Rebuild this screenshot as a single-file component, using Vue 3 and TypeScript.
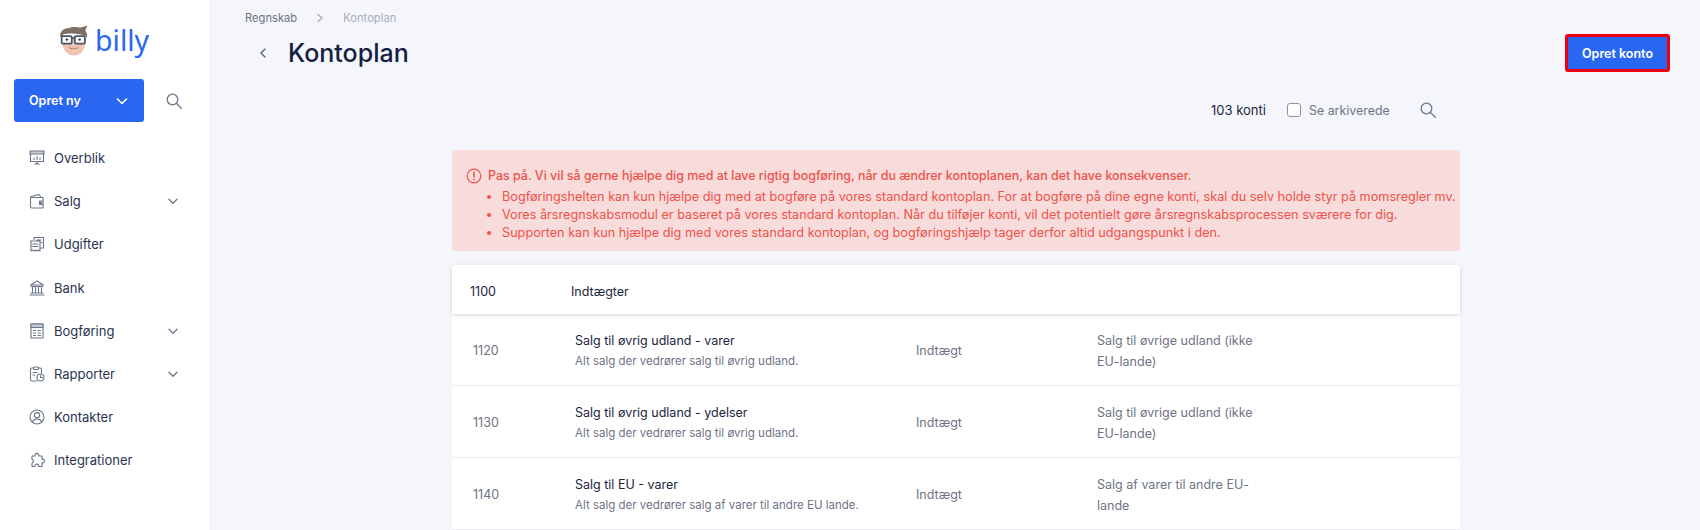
<script setup lang="ts">
interface NavItem { label: string; icon: string; caret?: boolean }
const nav: NavItem[] = [
  { label: 'Overblik', icon: 'board' },
  { label: 'Salg', icon: 'wallet', caret: true },
  { label: 'Udgifter', icon: 'bills' },
  { label: 'Bank', icon: 'bank' },
  { label: 'Bogføring', icon: 'calc', caret: true },
  { label: 'Rapporter', icon: 'report', caret: true },
  { label: 'Kontakter', icon: 'user' },
  { label: 'Integrationer', icon: 'puzzle' },
]
const rows = [
  { no: '1120', name: 'Salg til øvrig udland - varer', sub: 'Alt salg der vedrører salg til øvrig udland.', type: 'Indtægt', vat: 'Salg til øvrige udland (ikke EU-lande)' },
  { no: '1130', name: 'Salg til øvrig udland - ydelser', sub: 'Alt salg der vedrører salg til øvrig udland.', type: 'Indtægt', vat: 'Salg til øvrige udland (ikke EU-lande)' },
  { no: '1140', name: 'Salg til EU - varer', sub: 'Alt salg der vedrører salg af varer til andre EU lande.', type: 'Indtægt', vat: 'Salg af varer til andre EU-lande' },
]
</script>

<template>
  <div class="page">
    <aside class="side">
      <div class="logo">
        <svg width="29" height="33" viewBox="3 0 33 36">
          <path d="M5.500 14 C5.500 28 12 35 20 35 C29 35 33.500 28 33.500 14 Z" fill="#f0c4ae" />
          <path d="M4 13 C5 6 9 4 14 4 C20 1 26 4 29 3 L35 1 L33 7 C35 10 35 12 35 15 L33 13 C28 10 14 9 8 11 L6 15 Z" fill="#7d6f63" />
          <rect x="6" y="13" width="11.500" height="8.500" rx="1.500" fill="#fff" stroke="#44586a" stroke-width="2" />
          <rect x="21" y="13" width="11.500" height="8.500" rx="1.500" fill="#fff" stroke="#44586a" stroke-width="2" />
          <path d="M17.500 15h3.500" stroke="#44586a" stroke-width="2" />
          <circle cx="12" cy="17" r="1.400" fill="#333" />
          <circle cx="26.500" cy="17" r="1.400" fill="#333" />
          <path d="M14 26 C17 28 22 28 25 26" stroke="#a9786a" stroke-width="1" fill="none" />
        </svg>
        <span class="logo-text">billy</span>
      </div>
      <div class="create-row">
        <button class="create">
          <span>Opret ny</span>
          <svg width="14" height="14" viewBox="0 0 14 14" fill="none" stroke="#fff" stroke-width="1.600" stroke-linecap="round" stroke-linejoin="round"><path d="M2.500 5 7 9.500 11.500 5" /></svg>
        </button>
        <svg class="search-a" width="16" height="16" viewBox="0 0 16 16" fill="none" stroke="#6b7689" stroke-width="1.300" stroke-linecap="round"><circle cx="6.500" cy="6.500" r="5.300" /><path d="m10.500 10.500 4.800 4.800" /></svg>
      </div>
      <nav class="nav">
        <div v-for="n in nav" :key="n.label" class="nav-item">
          <svg class="nav-ico" width="16" height="16" viewBox="0 0 16 16" fill="none" stroke="#6b7689" stroke-width="1.100" stroke-linejoin="round" stroke-linecap="round">
            <g v-if="n.icon === 'board'"><rect x="1" y="1" width="14" height="3" fill="#c6ccd6" /><path d="M1.500 4v7.500h13V4M8 11.500v2M6 14.500l2-1.500 2 1.500M5 9.500V8M8 9.500V6.500M11 9.500V7.500" /></g>
            <g v-else-if="n.icon === 'wallet'"><path d="M2 3.500 10 1.500l1.500 2M1.500 4.500h12.500v10.500H3a1.500 1.500 0 0 1-1.500-1.500Z" /><path d="M14 8h-3.500v3.500H14" /><circle cx="12" cy="9.700" r=".7" /></g>
            <g v-else-if="n.icon === 'bills'"><path d="M5 3.500V1.500h9.500v10.500H12M1.500 5h9.500v10l-1.500-1-1.500 1-1.500-1-1.500 1-1.500-1-1.500 1V5ZM3.500 8h5.500M3.500 10.500h5.500M8 4h4M12 6.500h1" /></g>
            <g v-else-if="n.icon === 'bank'"><path d="M8 1 14.500 5h-13ZM2 6.500h12M3.500 7.500v5M6.500 7.500v5M9.500 7.500v5M12.500 7.500v5M2 13h12M1 15h14" /></g>
            <g v-else-if="n.icon === 'calc'"><rect x="2" y="1" width="12" height="14" /><rect x="2" y="1" width="12" height="3.500" fill="#c6ccd6" /><path d="M4.500 7.500h2M9 7.500h2.500M4.500 10h2M9 10h2.500M4.500 12.500h2M9 12.500h2.500" /></g>
            <g v-else-if="n.icon === 'report'"><path d="M7.500 15H3a1.500 1.500 0 0 1-1.500-1.500v-10A1.500 1.500 0 0 1 3 2h1.500M9.500 2H11a1.500 1.500 0 0 1 1.500 1.500V7" /><rect x="4.500" y="1" width="5" height="2.500" rx="1" /><circle cx="11.500" cy="11.500" r="3.500" /><path d="M11.500 9.500v2h2M4 6.500h4M4 9h2" /></g>
            <g v-else-if="n.icon === 'user'"><circle cx="8" cy="8" r="7" /><circle cx="8" cy="6.200" r="2.600" /><path d="M3.200 13c1-2.200 2.800-3 4.800-3s3.800.8 4.800 3" /></g>
            <g v-else><path d="M3 4h3a2 2 0 1 1 3.800 0H13v3.200a1.900 1.900 0 1 1 0 3.600V14.500H9.500a1.800 1.800 0 0 0-3.200-1.600l-.3 1.600H3v-3.300a1.900 1.900 0 0 0 0-3.700Z" /></g>
          </svg>
          <span class="nav-label">{{ n.label }}</span>
          <svg v-if="n.caret" class="caret" width="12" height="12" viewBox="0 0 12 12" fill="none" stroke="#6b7689" stroke-width="1.300" stroke-linecap="round" stroke-linejoin="round"><path d="M2 4.200 6 8.200 10 4.200" /></svg>
        </div>
      </nav>
    </aside>

    <main class="main">
      <div class="crumbs">
        <span class="c1">Regnskab</span>
        <svg width="8" height="10" viewBox="0 0 8 10" fill="none" stroke="#a9aeb9" stroke-width="1.400"><path d="M1.500 1 6 5 1.500 9" /></svg>
        <span class="c2">Kontoplan</span>
      </div>
      <header class="head">
        <svg class="back" width="8" height="10" viewBox="0 0 8 10" fill="none" stroke="#5c6678" stroke-width="1.400" stroke-linecap="round"><path d="M6 1 2 5l4 4" /></svg>
        <h1>Kontoplan</h1>
        <button class="primary">Opret konto</button>
      </header>
      <div class="tools">
        <span class="count">103 konti</span>
        <span class="check"></span>
        <span class="arch">Se arkiverede</span>
        <svg width="16" height="16" viewBox="0 0 16 16" fill="none" stroke="#6b7689" stroke-width="1.300" stroke-linecap="round"><circle cx="6.500" cy="6.500" r="5.300" /><path d="m10.500 10.500 4.800 4.800" /></svg>
      </div>

      <section class="content">
        <div class="alert">
          <div class="alert-title">
            <svg width="16" height="16" viewBox="0 0 16 16" fill="none" stroke="#f0514a" stroke-width="1.200" stroke-linecap="round"><circle cx="8" cy="8" r="6.800" /><path d="M8 4.200v4.600M8 11.300v.3" stroke-width="1.600" /></svg>
            <span>Pas på. Vi vil så gerne hjælpe dig med at lave rigtig bogføring, når du ændrer kontoplanen, kan det have konsekvenser.</span>
          </div>
          <ul>
            <li>Bogføringshelten kan kun hjælpe dig med at bogføre på vores standard kontoplan. For at bogføre på dine egne konti, skal du selv holde styr på momsregler mv.</li>
            <li>Vores årsregnskabsmodul er baseret på vores standard kontoplan. Når du tilføjer konti, vil det potentielt gøre årsregnskabsprocessen sværere for dig.</li>
            <li>Supporten kan kun hjælpe dig med vores standard kontoplan, og bogføringshjælp tager derfor altid udgangspunkt i den.</li>
          </ul>
        </div>

        <div class="table">
          <div class="group"><span class="g-no">1100</span><span>Indtægter</span></div>
          <div v-for="r in rows" :key="r.no" class="row">
            <span class="r-no">{{ r.no }}</span>
            <div class="r-name"><div class="nm">{{ r.name }}</div><div class="sub">{{ r.sub }}</div></div>
            <span class="r-type">{{ r.type }}</span>
            <span class="r-vat">{{ r.vat }}</span>
          </div>
        </div>
      </section>
    </main>
  </div>
</template>

<style>
html, body { margin: 0; background: #f4f6fb; overflow: hidden; }
</style>

<style scoped>
.page { display: flex; height: 530px; overflow: hidden; font-family: Inter, "Noto Sans", sans-serif; font-size: 13px; color: #1c2540; }
.side { width: 209px; flex: none; background: #fff; box-sizing: border-box; padding-top: 19px; }
.logo { display: flex; align-items: center; gap: 7px; height: 42px; padding-left: 59px; }
.logo-text { font-family: "Noto Sans", sans-serif; font-size: 28.500px; color: #2a67f0; line-height: 1; }
.create-row { display: flex; align-items: center; margin-top: 18px; padding-left: 14px; }
.create { width: 130px; height: 43px; box-sizing: border-box; padding: 0 15px; border: 0; border-radius: 3px; background: #2a67f0; color: #fff; font: 600 12.500px Inter, sans-serif; display: flex; align-items: center; justify-content: space-between; }
.search-a { margin-left: 22px; }
.nav { margin-top: 14.400px; padding-left: 29px; }
.nav-item { height: 43.200px; display: flex; align-items: center; position: relative; }
.nav-label { margin-left: 9px; font-size: 13px; color: #2a3350; }
.caret { position: absolute; left: 138px; }
.main { flex: 1; min-width: 0; }
.crumbs { display: flex; align-items: center; gap: 19px; height: 14px; margin: 11px 0 0 36px; font-size: 11.200px; }
.c1 { color: #6d7485; }
.c2 { color: #a9aeb9; }
.head { display: flex; align-items: center; height: 38px; margin-top: 9px; padding: 0 30px 0 50px; }
h1 { margin: 0 0 0 21px; font-size: 25px; font-weight: 500; color: #14203f; flex: 1; }
.primary { width: 105px; height: 38px; background: #2a67f0; border: 3px solid #f0000f; border-radius: 3px; color: #fff; font: 600 12.500px Inter, sans-serif; }
.tools { display: flex; align-items: center; height: 20px; margin-top: 28px; padding-left: 1002px; }
.count { width: 76px; font-size: 13px; color: #1c2540; }
.check { width: 12px; height: 12px; border: 1px solid #8b93a3; border-radius: 3px; background: #fff; }
.arch { margin-left: 8px; width: 111px; font-size: 12.400px; color: #6d7485; }
.content { margin: 30px 0 0 243px; width: 1008px; }
.alert { height: 101px; box-sizing: border-box; background: #f7dcdb; border-radius: 3px; padding: 17px 14px 0; color: #f0514a; font-size: 12.450px; line-height: 18px; }
.alert-title { display: flex; align-items: center; gap: 6px; font-weight: 500; height: 18px; }
ul { margin: 3px 0 0; padding: 0 0 0 36px; font-size: 12.680px; }
li { height: 18px; white-space: nowrap; }
.table { margin-top: 14px; background: #fff; }
.group { height: 49px; box-sizing: border-box; padding-top: 3px; display: flex; align-items: center; background: #fff; border-radius: 3px 3px 0 0; box-shadow: 0 1px 4px rgba(40, 50, 80, .2); font-size: 12.500px; position: relative; }
.g-no { width: 101px; padding-left: 18px; }
.row { height: 72px; box-sizing: border-box; padding-top: 2px; display: flex; align-items: center; border-bottom: 1px solid #ebecf3; }
.row:first-of-type { margin-top: 1px; }
.r-no { width: 123px; padding-left: 21px; box-sizing: border-box; color: #6d7485; font-size: 12.500px; }
.r-name { width: 341px; }
.nm { font-size: 12.500px; line-height: 20px; color: #1c2540; }
.sub { font-size: 11.500px; line-height: 20px; color: #6d7485; }
.r-type { width: 181px; color: #6d7485; font-size: 12.500px; }
.r-vat { width: 172px; color: #6d7485; font-size: 12.500px; line-height: 21px; }
</style>
